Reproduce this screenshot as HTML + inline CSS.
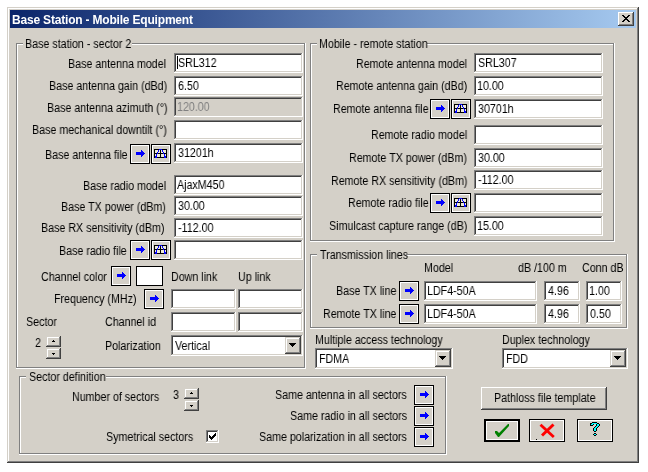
<!DOCTYPE html><html><head><meta charset="utf-8"><style>
html,body{margin:0;padding:0;width:648px;height:472px;overflow:hidden;background:#fff}
div,span,svg{position:absolute}
.t{will-change:transform;white-space:nowrap;font-family:"Liberation Sans",sans-serif;line-height:13px;transform-origin:0 0}
</style></head><body>
<div style="left:7px;top:7px;width:632px;height:456px;background:#D4D0C8;box-shadow:inset -1px -1px 0 #404040, inset 1px 1px 0 #D4D0C8, inset -2px -2px 0 #808080, inset 2px 2px 0 #fff;background:#D4D0C8"></div>
<div style="left:10px;top:10px;width:626px;height:18px;background:linear-gradient(to right,#0A246A,#A6CAF0)"></div>
<span class="t" style="left:12px;top:14px;color:#fff;font-size:12px;font-weight:bold;letter-spacing:-0.19px;">Base Station - Mobile Equipment</span>
<div style="left:618px;top:12px;width:16px;height:14px;box-shadow:inset -1px -1px 0 #404040, inset 1px 1px 0 #fff, inset -2px -2px 0 #808080;background:#D4D0C8"><svg width="16" height="14" shape-rendering="crispEdges" style="position:absolute;left:0;top:0"><g fill="#000"><rect x="4" y="3" width="1" height="1"/><rect x="5" y="3" width="1" height="1"/><rect x="10" y="3" width="1" height="1"/><rect x="11" y="3" width="1" height="1"/><rect x="5" y="4" width="1" height="1"/><rect x="6" y="4" width="1" height="1"/><rect x="9" y="4" width="1" height="1"/><rect x="10" y="4" width="1" height="1"/><rect x="6" y="5" width="1" height="1"/><rect x="7" y="5" width="1" height="1"/><rect x="8" y="5" width="1" height="1"/><rect x="9" y="5" width="1" height="1"/><rect x="7" y="6" width="1" height="1"/><rect x="8" y="6" width="1" height="1"/><rect x="6" y="7" width="1" height="1"/><rect x="7" y="7" width="1" height="1"/><rect x="8" y="7" width="1" height="1"/><rect x="9" y="7" width="1" height="1"/><rect x="5" y="8" width="1" height="1"/><rect x="6" y="8" width="1" height="1"/><rect x="9" y="8" width="1" height="1"/><rect x="10" y="8" width="1" height="1"/><rect x="4" y="9" width="1" height="1"/><rect x="5" y="9" width="1" height="1"/><rect x="10" y="9" width="1" height="1"/><rect x="11" y="9" width="1" height="1"/></g></svg></div>
<div style="left:16px;top:43px;width:290px;height:326px;box-shadow:inset -1px -1px 0 #fff, inset 1px 1px 0 #808080, inset -2px -2px 0 #808080, inset 2px 2px 0 #fff"></div>
<div style="left:23px;top:38px;width:109px;height:13px;background:#D4D0C8"></div>
<span class="t" style="left:25px;top:38px;color:#000;font-size:12px;transform:scaleX(0.89);">Base station - sector 2</span>
<span class="t" style="left:68px;top:58px;color:#000;font-size:12px;transform:scaleX(0.89);">Base antenna model</span>
<div style="left:174px;top:53px;width:129px;height:20px;background:#fff;box-shadow:inset -1px -1px 0 #fff, inset 1px 1px 0 #808080, inset -2px -2px 0 #D4D0C8, inset 2px 2px 0 #404040"></div>
<span class="t" style="left:178px;top:57px;color:#000;font-size:12px;transform:scaleX(0.89);">SRL312</span>
<span class="t" style="left:49px;top:80px;color:#000;font-size:12px;transform:scaleX(0.89);">Base antenna gain (dBd)</span>
<div style="left:174px;top:76px;width:129px;height:20px;background:#fff;box-shadow:inset -1px -1px 0 #fff, inset 1px 1px 0 #808080, inset -2px -2px 0 #D4D0C8, inset 2px 2px 0 #404040"></div>
<span class="t" style="left:178px;top:80px;color:#000;font-size:12px;transform:scaleX(0.89);">6.50</span>
<span class="t" style="left:47px;top:102px;color:#000;font-size:12px;transform:scaleX(0.89);">Base antenna azimuth (°)</span>
<div style="left:174px;top:97px;width:129px;height:20px;background:#D4D0C8;box-shadow:inset -1px -1px 0 #fff, inset 1px 1px 0 #808080, inset -2px -2px 0 #D4D0C8, inset 2px 2px 0 #404040"></div>
<span class="t" style="left:177px;top:101px;color:#808080;font-size:12px;transform:scaleX(0.89);">120.00</span>
<span class="t" style="left:32px;top:124px;color:#000;font-size:12px;transform:scaleX(0.89);">Base mechanical downtilt (°)</span>
<div style="left:174px;top:120px;width:129px;height:20px;background:#fff;box-shadow:inset -1px -1px 0 #fff, inset 1px 1px 0 #808080, inset -2px -2px 0 #D4D0C8, inset 2px 2px 0 #404040"></div>
<span class="t" style="left:45px;top:149px;color:#000;font-size:12px;transform:scaleX(0.89);">Base antenna file</span>
<div style="left:174px;top:143px;width:129px;height:20px;background:#fff;box-shadow:inset -1px -1px 0 #fff, inset 1px 1px 0 #808080, inset -2px -2px 0 #D4D0C8, inset 2px 2px 0 #404040"></div>
<span class="t" style="left:178px;top:147px;color:#000;font-size:12px;transform:scaleX(0.89);">31201h</span>
<span class="t" style="left:83px;top:180px;color:#000;font-size:12px;transform:scaleX(0.89);">Base radio model</span>
<div style="left:174px;top:175px;width:129px;height:20px;background:#fff;box-shadow:inset -1px -1px 0 #fff, inset 1px 1px 0 #808080, inset -2px -2px 0 #D4D0C8, inset 2px 2px 0 #404040"></div>
<span class="t" style="left:177px;top:179px;color:#000;font-size:12px;transform:scaleX(0.89);">AjaxM450</span>
<span class="t" style="left:61px;top:201px;color:#000;font-size:12px;transform:scaleX(0.89);">Base TX power (dBm)</span>
<div style="left:174px;top:196px;width:129px;height:20px;background:#fff;box-shadow:inset -1px -1px 0 #fff, inset 1px 1px 0 #808080, inset -2px -2px 0 #D4D0C8, inset 2px 2px 0 #404040"></div>
<span class="t" style="left:178px;top:200px;color:#000;font-size:12px;transform:scaleX(0.89);">30.00</span>
<span class="t" style="left:41px;top:222px;color:#000;font-size:12px;transform:scaleX(0.89);">Base RX sensitivity (dBm)</span>
<div style="left:174px;top:218px;width:129px;height:20px;background:#fff;box-shadow:inset -1px -1px 0 #fff, inset 1px 1px 0 #808080, inset -2px -2px 0 #D4D0C8, inset 2px 2px 0 #404040"></div>
<span class="t" style="left:178px;top:222px;color:#000;font-size:12px;transform:scaleX(0.89);">-112.00</span>
<span class="t" style="left:59px;top:245px;color:#000;font-size:12px;transform:scaleX(0.89);">Base radio file</span>
<div style="left:174px;top:240px;width:129px;height:20px;background:#fff;box-shadow:inset -1px -1px 0 #fff, inset 1px 1px 0 #808080, inset -2px -2px 0 #D4D0C8, inset 2px 2px 0 #404040"></div>
<div style="left:177px;top:56px;width:1px;height:13px;background:#000"></div>
<div style="left:130px;top:144px;width:20px;height:20px;box-shadow:inset 0 0 0 1px #000, inset 0 0 0 2px #fff;background:#D4D0C8"><svg width="20" height="20" shape-rendering="crispEdges" style="position:absolute;left:0;top:0"><g fill="#0000FF"><rect x="6" y="8" width="5" height="3"/><rect x="11" y="6" width="1" height="7"/><rect x="12" y="7" width="1" height="5"/><rect x="13" y="8" width="1" height="3"/><rect x="14" y="9" width="1" height="1"/></g></svg></div>
<div style="left:151px;top:144px;width:20px;height:20px;box-shadow:inset 0 0 0 1px #000, inset 0 0 0 2px #fff;background:#D4D0C8"><svg width="20" height="20" shape-rendering="crispEdges" style="position:absolute;left:0;top:0"><rect x="3" y="5" width="13" height="9" fill="#000"/><rect x="4" y="6" width="5" height="3" fill="#EDEAD8"/><rect x="4" y="10" width="5" height="3" fill="#EDEAD8"/><rect x="10" y="6" width="5" height="3" fill="#EDEAD8"/><rect x="10" y="10" width="5" height="3" fill="#EDEAD8"/><g fill="#0000FF"><rect x="8" y="5" width="3" height="1"/><rect x="7" y="6" width="1" height="2"/><rect x="6" y="8" width="1" height="2"/><rect x="5" y="10" width="1" height="2"/><rect x="4" y="12" width="2" height="2"/><rect x="11" y="6" width="1" height="2"/><rect x="12" y="8" width="1" height="2"/><rect x="13" y="10" width="1" height="2"/><rect x="13" y="12" width="2" height="2"/></g></svg></div>
<div style="left:130px;top:240px;width:20px;height:20px;box-shadow:inset 0 0 0 1px #000, inset 0 0 0 2px #fff;background:#D4D0C8"><svg width="20" height="20" shape-rendering="crispEdges" style="position:absolute;left:0;top:0"><g fill="#0000FF"><rect x="6" y="8" width="5" height="3"/><rect x="11" y="6" width="1" height="7"/><rect x="12" y="7" width="1" height="5"/><rect x="13" y="8" width="1" height="3"/><rect x="14" y="9" width="1" height="1"/></g></svg></div>
<div style="left:151px;top:240px;width:20px;height:20px;box-shadow:inset 0 0 0 1px #000, inset 0 0 0 2px #fff;background:#D4D0C8"><svg width="20" height="20" shape-rendering="crispEdges" style="position:absolute;left:0;top:0"><rect x="3" y="5" width="13" height="9" fill="#000"/><rect x="4" y="6" width="5" height="3" fill="#EDEAD8"/><rect x="4" y="10" width="5" height="3" fill="#EDEAD8"/><rect x="10" y="6" width="5" height="3" fill="#EDEAD8"/><rect x="10" y="10" width="5" height="3" fill="#EDEAD8"/><g fill="#0000FF"><rect x="8" y="5" width="3" height="1"/><rect x="7" y="6" width="1" height="2"/><rect x="6" y="8" width="1" height="2"/><rect x="5" y="10" width="1" height="2"/><rect x="4" y="12" width="2" height="2"/><rect x="11" y="6" width="1" height="2"/><rect x="12" y="8" width="1" height="2"/><rect x="13" y="10" width="1" height="2"/><rect x="13" y="12" width="2" height="2"/></g></svg></div>
<span class="t" style="left:41px;top:271px;color:#000;font-size:12px;transform:scaleX(0.89);">Channel color</span>
<div style="left:111px;top:266px;width:20px;height:20px;box-shadow:inset 0 0 0 1px #000, inset 0 0 0 2px #fff;background:#D4D0C8"><svg width="20" height="20" shape-rendering="crispEdges" style="position:absolute;left:0;top:0"><g fill="#0000FF"><rect x="6" y="8" width="5" height="3"/><rect x="11" y="6" width="1" height="7"/><rect x="12" y="7" width="1" height="5"/><rect x="13" y="8" width="1" height="3"/><rect x="14" y="9" width="1" height="1"/></g></svg></div>
<div style="left:136px;top:266px;width:27px;height:20px;background:#fff;box-shadow:inset 0 0 0 1px #000"></div>
<span class="t" style="left:171px;top:271px;color:#000;font-size:12px;transform:scaleX(0.89);">Down link</span>
<span class="t" style="left:238px;top:271px;color:#000;font-size:12px;transform:scaleX(0.89);">Up link</span>
<span class="t" style="left:54px;top:293px;color:#000;font-size:12px;transform:scaleX(0.89);">Frequency (MHz)</span>
<div style="left:144px;top:289px;width:20px;height:20px;box-shadow:inset 0 0 0 1px #000, inset 0 0 0 2px #fff;background:#D4D0C8"><svg width="20" height="20" shape-rendering="crispEdges" style="position:absolute;left:0;top:0"><g fill="#0000FF"><rect x="6" y="8" width="5" height="3"/><rect x="11" y="6" width="1" height="7"/><rect x="12" y="7" width="1" height="5"/><rect x="13" y="8" width="1" height="3"/><rect x="14" y="9" width="1" height="1"/></g></svg></div>
<div style="left:171px;top:289px;width:65px;height:20px;background:#fff;box-shadow:inset -1px -1px 0 #fff, inset 1px 1px 0 #808080, inset -2px -2px 0 #D4D0C8, inset 2px 2px 0 #404040"></div>
<div style="left:238px;top:289px;width:65px;height:20px;background:#fff;box-shadow:inset -1px -1px 0 #fff, inset 1px 1px 0 #808080, inset -2px -2px 0 #D4D0C8, inset 2px 2px 0 #404040"></div>
<span class="t" style="left:26px;top:316px;color:#000;font-size:12px;transform:scaleX(0.89);">Sector</span>
<span class="t" style="left:105px;top:316px;color:#000;font-size:12px;transform:scaleX(0.89);">Channel id</span>
<div style="left:171px;top:312px;width:65px;height:20px;background:#fff;box-shadow:inset -1px -1px 0 #fff, inset 1px 1px 0 #808080, inset -2px -2px 0 #D4D0C8, inset 2px 2px 0 #404040"></div>
<div style="left:238px;top:312px;width:65px;height:20px;background:#fff;box-shadow:inset -1px -1px 0 #fff, inset 1px 1px 0 #808080, inset -2px -2px 0 #D4D0C8, inset 2px 2px 0 #404040"></div>
<span class="t" style="left:35px;top:337px;color:#000;font-size:12px;transform:scaleX(0.89);">2</span>
<div style="left:46px;top:336px;width:15px;height:11px;box-shadow:inset -1px -1px 0 #404040, inset 1px 1px 0 #D4D0C8, inset -2px -2px 0 #808080, inset 2px 2px 0 #fff;background:#D4D0C8"><svg width="15" height="11" shape-rendering="crispEdges" style="position:absolute;left:0;top:0"><g fill="#000"><rect x="7" y="4" width="1" height="1"/><rect x="6" y="5" width="3" height="1"/></g></svg></div>
<div style="left:46px;top:348px;width:15px;height:11px;box-shadow:inset -1px -1px 0 #404040, inset 1px 1px 0 #D4D0C8, inset -2px -2px 0 #808080, inset 2px 2px 0 #fff;background:#D4D0C8"><svg width="15" height="11" shape-rendering="crispEdges" style="position:absolute;left:0;top:0"><g fill="#000"><rect x="6" y="5" width="3" height="1"/><rect x="7" y="6" width="1" height="1"/></g></svg></div>
<span class="t" style="left:105px;top:340px;color:#000;font-size:12px;transform:scaleX(0.89);">Polarization</span>
<div style="left:171px;top:335px;width:132px;height:21px;background:#fff;box-shadow:inset -1px -1px 0 #fff, inset 1px 1px 0 #808080, inset -2px -2px 0 #D4D0C8, inset 2px 2px 0 #404040"></div>
<div style="left:285px;top:337px;width:16px;height:17px;box-shadow:inset -1px -1px 0 #404040, inset 1px 1px 0 #D4D0C8, inset -2px -2px 0 #808080, inset 2px 2px 0 #fff;background:#D4D0C8"><svg width="16" height="17" shape-rendering="crispEdges" style="position:absolute;left:0;top:0"><g fill="#000"><rect x="4" y="6" width="7" height="1"/><rect x="5" y="7" width="5" height="1"/><rect x="6" y="8" width="3" height="1"/><rect x="7" y="9" width="1" height="1"/></g></svg></div>
<span class="t" style="left:175px;top:340px;color:#000;font-size:12px;transform:scaleX(0.89);">Vertical</span>
<div style="left:310px;top:43px;width:305px;height:199px;box-shadow:inset -1px -1px 0 #fff, inset 1px 1px 0 #808080, inset -2px -2px 0 #808080, inset 2px 2px 0 #fff"></div>
<div style="left:317px;top:38px;width:110px;height:13px;background:#D4D0C8"></div>
<span class="t" style="left:319px;top:38px;color:#000;font-size:12px;transform:scaleX(0.89);">Mobile - remote station</span>
<span class="t" style="left:356px;top:58px;color:#000;font-size:12px;transform:scaleX(0.89);">Remote antenna model</span>
<div style="left:474px;top:53px;width:129px;height:20px;background:#fff;box-shadow:inset -1px -1px 0 #fff, inset 1px 1px 0 #808080, inset -2px -2px 0 #D4D0C8, inset 2px 2px 0 #404040"></div>
<span class="t" style="left:478px;top:57px;color:#000;font-size:12px;transform:scaleX(0.89);">SRL307</span>
<span class="t" style="left:336px;top:80px;color:#000;font-size:12px;transform:scaleX(0.89);">Remote antenna gain (dBd)</span>
<div style="left:474px;top:76px;width:129px;height:20px;background:#fff;box-shadow:inset -1px -1px 0 #fff, inset 1px 1px 0 #808080, inset -2px -2px 0 #D4D0C8, inset 2px 2px 0 #404040"></div>
<span class="t" style="left:477px;top:80px;color:#000;font-size:12px;transform:scaleX(0.89);">10.00</span>
<span class="t" style="left:333px;top:103px;color:#000;font-size:12px;transform:scaleX(0.89);">Remote antenna file</span>
<div style="left:474px;top:99px;width:129px;height:20px;background:#fff;box-shadow:inset -1px -1px 0 #fff, inset 1px 1px 0 #808080, inset -2px -2px 0 #D4D0C8, inset 2px 2px 0 #404040"></div>
<span class="t" style="left:478px;top:103px;color:#000;font-size:12px;transform:scaleX(0.89);">30701h</span>
<span class="t" style="left:371px;top:129px;color:#000;font-size:12px;transform:scaleX(0.89);">Remote radio model</span>
<div style="left:474px;top:125px;width:129px;height:20px;background:#fff;box-shadow:inset -1px -1px 0 #fff, inset 1px 1px 0 #808080, inset -2px -2px 0 #D4D0C8, inset 2px 2px 0 #404040"></div>
<span class="t" style="left:349px;top:152px;color:#000;font-size:12px;transform:scaleX(0.89);">Remote TX power (dBm)</span>
<div style="left:474px;top:148px;width:129px;height:20px;background:#fff;box-shadow:inset -1px -1px 0 #fff, inset 1px 1px 0 #808080, inset -2px -2px 0 #D4D0C8, inset 2px 2px 0 #404040"></div>
<span class="t" style="left:478px;top:152px;color:#000;font-size:12px;transform:scaleX(0.89);">30.00</span>
<span class="t" style="left:331px;top:175px;color:#000;font-size:12px;transform:scaleX(0.89);">Remote RX sensitivity (dBm)</span>
<div style="left:474px;top:170px;width:129px;height:20px;background:#fff;box-shadow:inset -1px -1px 0 #fff, inset 1px 1px 0 #808080, inset -2px -2px 0 #D4D0C8, inset 2px 2px 0 #404040"></div>
<span class="t" style="left:478px;top:174px;color:#000;font-size:12px;transform:scaleX(0.89);">-112.00</span>
<span class="t" style="left:348px;top:197px;color:#000;font-size:12px;transform:scaleX(0.89);">Remote radio file</span>
<div style="left:474px;top:193px;width:129px;height:20px;background:#fff;box-shadow:inset -1px -1px 0 #fff, inset 1px 1px 0 #808080, inset -2px -2px 0 #D4D0C8, inset 2px 2px 0 #404040"></div>
<span class="t" style="left:329px;top:220px;color:#000;font-size:12px;transform:scaleX(0.89);">Simulcast capture range (dB)</span>
<div style="left:474px;top:216px;width:129px;height:20px;background:#fff;box-shadow:inset -1px -1px 0 #fff, inset 1px 1px 0 #808080, inset -2px -2px 0 #D4D0C8, inset 2px 2px 0 #404040"></div>
<span class="t" style="left:477px;top:220px;color:#000;font-size:12px;transform:scaleX(0.89);">15.00</span>
<div style="left:430px;top:99px;width:20px;height:20px;box-shadow:inset 0 0 0 1px #000, inset 0 0 0 2px #fff;background:#D4D0C8"><svg width="20" height="20" shape-rendering="crispEdges" style="position:absolute;left:0;top:0"><g fill="#0000FF"><rect x="6" y="8" width="5" height="3"/><rect x="11" y="6" width="1" height="7"/><rect x="12" y="7" width="1" height="5"/><rect x="13" y="8" width="1" height="3"/><rect x="14" y="9" width="1" height="1"/></g></svg></div>
<div style="left:451px;top:99px;width:20px;height:20px;box-shadow:inset 0 0 0 1px #000, inset 0 0 0 2px #fff;background:#D4D0C8"><svg width="20" height="20" shape-rendering="crispEdges" style="position:absolute;left:0;top:0"><rect x="3" y="5" width="13" height="9" fill="#000"/><rect x="4" y="6" width="5" height="3" fill="#EDEAD8"/><rect x="4" y="10" width="5" height="3" fill="#EDEAD8"/><rect x="10" y="6" width="5" height="3" fill="#EDEAD8"/><rect x="10" y="10" width="5" height="3" fill="#EDEAD8"/><g fill="#0000FF"><rect x="8" y="5" width="3" height="1"/><rect x="7" y="6" width="1" height="2"/><rect x="6" y="8" width="1" height="2"/><rect x="5" y="10" width="1" height="2"/><rect x="4" y="12" width="2" height="2"/><rect x="11" y="6" width="1" height="2"/><rect x="12" y="8" width="1" height="2"/><rect x="13" y="10" width="1" height="2"/><rect x="13" y="12" width="2" height="2"/></g></svg></div>
<div style="left:430px;top:193px;width:20px;height:20px;box-shadow:inset 0 0 0 1px #000, inset 0 0 0 2px #fff;background:#D4D0C8"><svg width="20" height="20" shape-rendering="crispEdges" style="position:absolute;left:0;top:0"><g fill="#0000FF"><rect x="6" y="8" width="5" height="3"/><rect x="11" y="6" width="1" height="7"/><rect x="12" y="7" width="1" height="5"/><rect x="13" y="8" width="1" height="3"/><rect x="14" y="9" width="1" height="1"/></g></svg></div>
<div style="left:451px;top:193px;width:20px;height:20px;box-shadow:inset 0 0 0 1px #000, inset 0 0 0 2px #fff;background:#D4D0C8"><svg width="20" height="20" shape-rendering="crispEdges" style="position:absolute;left:0;top:0"><rect x="3" y="5" width="13" height="9" fill="#000"/><rect x="4" y="6" width="5" height="3" fill="#EDEAD8"/><rect x="4" y="10" width="5" height="3" fill="#EDEAD8"/><rect x="10" y="6" width="5" height="3" fill="#EDEAD8"/><rect x="10" y="10" width="5" height="3" fill="#EDEAD8"/><g fill="#0000FF"><rect x="8" y="5" width="3" height="1"/><rect x="7" y="6" width="1" height="2"/><rect x="6" y="8" width="1" height="2"/><rect x="5" y="10" width="1" height="2"/><rect x="4" y="12" width="2" height="2"/><rect x="11" y="6" width="1" height="2"/><rect x="12" y="8" width="1" height="2"/><rect x="13" y="10" width="1" height="2"/><rect x="13" y="12" width="2" height="2"/></g></svg></div>
<div style="left:310px;top:254px;width:318px;height:75px;box-shadow:inset -1px -1px 0 #fff, inset 1px 1px 0 #808080, inset -2px -2px 0 #808080, inset 2px 2px 0 #fff"></div>
<div style="left:317px;top:249px;width:89px;height:13px;background:#D4D0C8"></div>
<span class="t" style="left:320px;top:249px;color:#000;font-size:12px;transform:scaleX(0.89);">Transmission lines</span>
<span class="t" style="left:424px;top:262px;color:#000;font-size:12px;transform:scaleX(0.89);">Model</span>
<span class="t" style="left:518px;top:262px;color:#000;font-size:12px;transform:scaleX(0.89);">dB /100 m</span>
<span class="t" style="left:582px;top:262px;color:#000;font-size:12px;transform:scaleX(0.89);">Conn dB</span>
<span class="t" style="left:336px;top:285px;color:#000;font-size:12px;transform:scaleX(0.89);">Base TX line</span>
<span class="t" style="left:323px;top:308px;color:#000;font-size:12px;transform:scaleX(0.89);">Remote TX line</span>
<div style="left:399px;top:281px;width:20px;height:20px;box-shadow:inset 0 0 0 1px #000, inset 0 0 0 2px #fff;background:#D4D0C8"><svg width="20" height="20" shape-rendering="crispEdges" style="position:absolute;left:0;top:0"><g fill="#0000FF"><rect x="6" y="8" width="5" height="3"/><rect x="11" y="6" width="1" height="7"/><rect x="12" y="7" width="1" height="5"/><rect x="13" y="8" width="1" height="3"/><rect x="14" y="9" width="1" height="1"/></g></svg></div>
<div style="left:399px;top:304px;width:20px;height:20px;box-shadow:inset 0 0 0 1px #000, inset 0 0 0 2px #fff;background:#D4D0C8"><svg width="20" height="20" shape-rendering="crispEdges" style="position:absolute;left:0;top:0"><g fill="#0000FF"><rect x="6" y="8" width="5" height="3"/><rect x="11" y="6" width="1" height="7"/><rect x="12" y="7" width="1" height="5"/><rect x="13" y="8" width="1" height="3"/><rect x="14" y="9" width="1" height="1"/></g></svg></div>
<div style="left:424px;top:281px;width:113px;height:20px;background:#fff;box-shadow:inset -1px -1px 0 #fff, inset 1px 1px 0 #808080, inset -2px -2px 0 #D4D0C8, inset 2px 2px 0 #404040"></div>
<span class="t" style="left:427px;top:285px;color:#000;font-size:12px;transform:scaleX(0.89);">LDF4-50A</span>
<div style="left:424px;top:304px;width:113px;height:20px;background:#fff;box-shadow:inset -1px -1px 0 #fff, inset 1px 1px 0 #808080, inset -2px -2px 0 #D4D0C8, inset 2px 2px 0 #404040"></div>
<span class="t" style="left:427px;top:308px;color:#000;font-size:12px;transform:scaleX(0.89);">LDF4-50A</span>
<div style="left:544px;top:281px;width:36px;height:20px;background:#fff;box-shadow:inset -1px -1px 0 #fff, inset 1px 1px 0 #808080, inset -2px -2px 0 #D4D0C8, inset 2px 2px 0 #404040"></div>
<span class="t" style="left:548px;top:285px;color:#000;font-size:12px;transform:scaleX(0.89);">4.96</span>
<div style="left:544px;top:304px;width:36px;height:20px;background:#fff;box-shadow:inset -1px -1px 0 #fff, inset 1px 1px 0 #808080, inset -2px -2px 0 #D4D0C8, inset 2px 2px 0 #404040"></div>
<span class="t" style="left:548px;top:308px;color:#000;font-size:12px;transform:scaleX(0.89);">4.96</span>
<div style="left:586px;top:281px;width:36px;height:20px;background:#fff;box-shadow:inset -1px -1px 0 #fff, inset 1px 1px 0 #808080, inset -2px -2px 0 #D4D0C8, inset 2px 2px 0 #404040"></div>
<span class="t" style="left:589px;top:285px;color:#000;font-size:12px;transform:scaleX(0.89);">1.00</span>
<div style="left:586px;top:304px;width:36px;height:20px;background:#fff;box-shadow:inset -1px -1px 0 #fff, inset 1px 1px 0 #808080, inset -2px -2px 0 #D4D0C8, inset 2px 2px 0 #404040"></div>
<span class="t" style="left:590px;top:308px;color:#000;font-size:12px;transform:scaleX(0.89);">0.50</span>
<span class="t" style="left:315px;top:334px;color:#000;font-size:12px;transform:scaleX(0.89);">Multiple access technology</span>
<div style="left:315px;top:348px;width:138px;height:21px;background:#fff;box-shadow:inset -1px -1px 0 #fff, inset 1px 1px 0 #808080, inset -2px -2px 0 #D4D0C8, inset 2px 2px 0 #404040"></div>
<div style="left:435px;top:350px;width:16px;height:17px;box-shadow:inset -1px -1px 0 #404040, inset 1px 1px 0 #D4D0C8, inset -2px -2px 0 #808080, inset 2px 2px 0 #fff;background:#D4D0C8"><svg width="16" height="17" shape-rendering="crispEdges" style="position:absolute;left:0;top:0"><g fill="#000"><rect x="4" y="6" width="7" height="1"/><rect x="5" y="7" width="5" height="1"/><rect x="6" y="8" width="3" height="1"/><rect x="7" y="9" width="1" height="1"/></g></svg></div>
<span class="t" style="left:319px;top:353px;color:#000;font-size:12px;transform:scaleX(0.89);">FDMA</span>
<span class="t" style="left:502px;top:334px;color:#000;font-size:12px;transform:scaleX(0.89);">Duplex technology</span>
<div style="left:502px;top:348px;width:126px;height:21px;background:#fff;box-shadow:inset -1px -1px 0 #fff, inset 1px 1px 0 #808080, inset -2px -2px 0 #D4D0C8, inset 2px 2px 0 #404040"></div>
<div style="left:610px;top:350px;width:16px;height:17px;box-shadow:inset -1px -1px 0 #404040, inset 1px 1px 0 #D4D0C8, inset -2px -2px 0 #808080, inset 2px 2px 0 #fff;background:#D4D0C8"><svg width="16" height="17" shape-rendering="crispEdges" style="position:absolute;left:0;top:0"><g fill="#000"><rect x="4" y="6" width="7" height="1"/><rect x="5" y="7" width="5" height="1"/><rect x="6" y="8" width="3" height="1"/><rect x="7" y="9" width="1" height="1"/></g></svg></div>
<span class="t" style="left:506px;top:353px;color:#000;font-size:12px;transform:scaleX(0.89);">FDD</span>
<div style="left:19px;top:376px;width:428px;height:79px;box-shadow:inset -1px -1px 0 #fff, inset 1px 1px 0 #808080, inset -2px -2px 0 #808080, inset 2px 2px 0 #fff"></div>
<div style="left:26px;top:371px;width:80px;height:13px;background:#D4D0C8"></div>
<span class="t" style="left:29px;top:371px;color:#000;font-size:12px;transform:scaleX(0.89);">Sector definition</span>
<span class="t" style="left:72px;top:391px;color:#000;font-size:12px;transform:scaleX(0.89);">Number of sectors</span>
<span class="t" style="left:173px;top:389px;color:#000;font-size:12px;transform:scaleX(0.89);">3</span>
<div style="left:184px;top:388px;width:15px;height:11px;box-shadow:inset -1px -1px 0 #404040, inset 1px 1px 0 #D4D0C8, inset -2px -2px 0 #808080, inset 2px 2px 0 #fff;background:#D4D0C8"><svg width="15" height="11" shape-rendering="crispEdges" style="position:absolute;left:0;top:0"><g fill="#000"><rect x="7" y="4" width="1" height="1"/><rect x="6" y="5" width="3" height="1"/></g></svg></div>
<div style="left:184px;top:400px;width:15px;height:11px;box-shadow:inset -1px -1px 0 #404040, inset 1px 1px 0 #D4D0C8, inset -2px -2px 0 #808080, inset 2px 2px 0 #fff;background:#D4D0C8"><svg width="15" height="11" shape-rendering="crispEdges" style="position:absolute;left:0;top:0"><g fill="#000"><rect x="6" y="5" width="3" height="1"/><rect x="7" y="6" width="1" height="1"/></g></svg></div>
<span class="t" style="left:106px;top:431px;color:#000;font-size:12px;transform:scaleX(0.89);">Symetrical sectors</span>
<div style="left:206px;top:430px;width:13px;height:13px;background:#fff;box-shadow:inset -1px -1px 0 #fff, inset 1px 1px 0 #808080, inset -2px -2px 0 #D4D0C8, inset 2px 2px 0 #404040"></div>
<svg width="13" height="13" shape-rendering="crispEdges" style="left:206px;top:430px"><g fill="#000"><rect x="9" y="3" width="1" height="1"/><rect x="8" y="4" width="1" height="1"/><rect x="9" y="4" width="1" height="1"/><rect x="3" y="5" width="1" height="1"/><rect x="7" y="5" width="1" height="1"/><rect x="8" y="5" width="1" height="1"/><rect x="9" y="5" width="1" height="1"/><rect x="3" y="6" width="1" height="1"/><rect x="4" y="6" width="1" height="1"/><rect x="6" y="6" width="1" height="1"/><rect x="7" y="6" width="1" height="1"/><rect x="8" y="6" width="1" height="1"/><rect x="3" y="7" width="1" height="1"/><rect x="4" y="7" width="1" height="1"/><rect x="5" y="7" width="1" height="1"/><rect x="6" y="7" width="1" height="1"/><rect x="7" y="7" width="1" height="1"/><rect x="4" y="8" width="1" height="1"/><rect x="5" y="8" width="1" height="1"/><rect x="6" y="8" width="1" height="1"/><rect x="5" y="9" width="1" height="1"/></g></svg>
<span class="t" style="left:275px;top:389px;color:#000;font-size:12px;transform:scaleX(0.89);">Same antenna in all sectors</span>
<span class="t" style="left:290px;top:410px;color:#000;font-size:12px;transform:scaleX(0.89);">Same radio in all sectors</span>
<span class="t" style="left:259px;top:431px;color:#000;font-size:12px;transform:scaleX(0.89);">Same polarization in all sectors</span>
<div style="left:414px;top:385px;width:20px;height:20px;box-shadow:inset 0 0 0 1px #000, inset 0 0 0 2px #fff;background:#D4D0C8"><svg width="20" height="20" shape-rendering="crispEdges" style="position:absolute;left:0;top:0"><g fill="#0000FF"><rect x="6" y="8" width="5" height="3"/><rect x="11" y="6" width="1" height="7"/><rect x="12" y="7" width="1" height="5"/><rect x="13" y="8" width="1" height="3"/><rect x="14" y="9" width="1" height="1"/></g></svg></div>
<div style="left:414px;top:406px;width:20px;height:20px;box-shadow:inset 0 0 0 1px #000, inset 0 0 0 2px #fff;background:#D4D0C8"><svg width="20" height="20" shape-rendering="crispEdges" style="position:absolute;left:0;top:0"><g fill="#0000FF"><rect x="6" y="8" width="5" height="3"/><rect x="11" y="6" width="1" height="7"/><rect x="12" y="7" width="1" height="5"/><rect x="13" y="8" width="1" height="3"/><rect x="14" y="9" width="1" height="1"/></g></svg></div>
<div style="left:414px;top:427px;width:20px;height:20px;box-shadow:inset 0 0 0 1px #000, inset 0 0 0 2px #fff;background:#D4D0C8"><svg width="20" height="20" shape-rendering="crispEdges" style="position:absolute;left:0;top:0"><g fill="#0000FF"><rect x="6" y="8" width="5" height="3"/><rect x="11" y="6" width="1" height="7"/><rect x="12" y="7" width="1" height="5"/><rect x="13" y="8" width="1" height="3"/><rect x="14" y="9" width="1" height="1"/></g></svg></div>
<div style="left:481px;top:387px;width:126px;height:23px;box-shadow:inset -1px -1px 0 #404040, inset 1px 1px 0 #fff, inset -2px -2px 0 #808080;background:#D4D0C8"></div>
<span class="t" style="left:494px;top:392px;color:#000;font-size:12px;transform:scaleX(0.89);">Pathloss file template</span>
<div style="left:484px;top:419px;width:36px;height:23px;box-shadow:inset 0 0 0 2px #000, inset 0 0 0 3px #fff;background:#D4D0C8"></div>
<svg width="36" height="23" style="left:484px;top:419px"><polygon points="11,12 13,12 15,14 24,5 25,5 25,7 15,18 14,18 11,14" fill="#008000"/></svg>
<div style="left:529px;top:419px;width:36px;height:23px;box-shadow:inset 0 0 0 1px #000, inset 0 0 0 2px #fff;background:#D4D0C8"></div>
<svg width="36" height="23" style="left:529px;top:419px"><path d="M11.5,5.8 L24.8,18" stroke="#FF0000" stroke-width="2.8" fill="none"/><path d="M24.5,5.5 L13,16.5" stroke="#FF0000" stroke-width="3" fill="none"/><rect x="7" y="20" width="1" height="1" fill="#000"/></svg>
<div style="left:577px;top:419px;width:36px;height:23px;box-shadow:inset 0 0 0 1px #000, inset 0 0 0 2px #fff;background:#D4D0C8"></div>
<svg width="36" height="23" shape-rendering="crispEdges" style="left:577px;top:419px"><rect x="15" y="3" width="5" height="1" fill="#000"/><rect x="13" y="4" width="2" height="1" fill="#000"/><rect x="15" y="4" width="5" height="1" fill="#00FFFF"/><rect x="20" y="4" width="2" height="1" fill="#000"/><rect x="13" y="5" width="1" height="1" fill="#000"/><rect x="14" y="5" width="2" height="1" fill="#00FFFF"/><rect x="16" y="5" width="1" height="1" fill="#000"/><rect x="19" y="5" width="1" height="1" fill="#000"/><rect x="20" y="5" width="2" height="1" fill="#00FFFF"/><rect x="22" y="5" width="1" height="1" fill="#000"/><rect x="13" y="6" width="3" height="1" fill="#000"/><rect x="19" y="6" width="1" height="1" fill="#000"/><rect x="20" y="6" width="2" height="1" fill="#00FFFF"/><rect x="22" y="6" width="1" height="1" fill="#000"/><rect x="18" y="7" width="1" height="1" fill="#000"/><rect x="19" y="7" width="2" height="1" fill="#00FFFF"/><rect x="21" y="7" width="1" height="1" fill="#000"/><rect x="17" y="8" width="1" height="1" fill="#000"/><rect x="18" y="8" width="2" height="1" fill="#00FFFF"/><rect x="20" y="8" width="1" height="1" fill="#000"/><rect x="16" y="9" width="1" height="1" fill="#000"/><rect x="17" y="9" width="2" height="1" fill="#00FFFF"/><rect x="19" y="9" width="1" height="1" fill="#000"/><rect x="16" y="10" width="1" height="1" fill="#000"/><rect x="17" y="10" width="2" height="1" fill="#00FFFF"/><rect x="19" y="10" width="1" height="1" fill="#000"/><rect x="16" y="11" width="1" height="1" fill="#000"/><rect x="17" y="11" width="2" height="1" fill="#00FFFF"/><rect x="19" y="11" width="1" height="1" fill="#000"/><rect x="17" y="12" width="2" height="1" fill="#000"/><rect x="17" y="14" width="2" height="1" fill="#000"/><rect x="16" y="15" width="1" height="1" fill="#000"/><rect x="17" y="15" width="2" height="1" fill="#00FFFF"/><rect x="19" y="15" width="1" height="1" fill="#000"/><rect x="17" y="16" width="2" height="1" fill="#000"/></svg>
</body></html>
